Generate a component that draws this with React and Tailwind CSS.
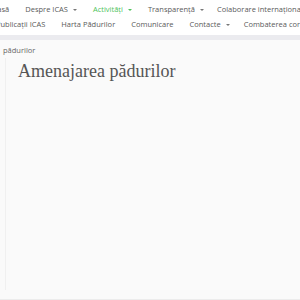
import React from "react";

function Caret({ color = "border-t-[#777]" }) {
  return (
    <span
      className={`ml-[5px] inline-block w-0 h-0 border-x-[2px] border-x-transparent border-t-[2px] ${color} align-middle`}
    />
  );
}

export default function App() {
  const font = { fontFamily: '"Open Sans", "DejaVu Sans", sans-serif' };
  return (
    <div className="w-[300px] h-[300px] overflow-hidden bg-[#fafafa]" style={font}>
      <header className="bg-white h-[35px] overflow-hidden text-[7.5px] text-[#5a5a5a] leading-none whitespace-nowrap">
        <div className="flex items-center h-[18px] pt-[2px] ml-[-11px] gap-[16px]">
          <span>Acasă</span>
          <span className="flex items-center">Despre ICAS<Caret /></span>
          <span className="flex items-center text-[#4fc35b]">Activități<Caret color="border-t-[#4fc35b]" /></span>
          <span className="flex items-center">Transparență<Caret /></span>
          <span className="ml-[-3px]">Colaborare internațională</span>
        </div>
        <div className="flex items-center h-[13px] ml-[-4px] gap-[16px]">
          <span>Publicații ICAS</span>
          <span>Harta Pădurilor</span>
          <span>Comunicare</span>
          <span className="flex items-center">Contacte<Caret /></span>
          <span className="ml-[-2px]">Combaterea corupției</span>
        </div>
      </header>
      <div className="h-[5px] bg-[#ebebef]" />
      <div className="h-[259px] pt-[7px]">
        <div className="pl-[3px] text-[7.5px] text-[#666] leading-none">pădurilor</div>
        <div className="ml-[5px] mt-[3px] h-[232px] border-l border-[#f0f0f0] pl-[12px] pt-[4px]">
          <h1
            className="text-[18px] leading-none text-[#555]"
            style={{ fontFamily: '"Liberation Serif", serif' }}
          >
            Amenajarea pădurilor
          </h1>
        </div>
      </div>
      <div className="h-px bg-[#ececec]" />
    </div>
  );
}
